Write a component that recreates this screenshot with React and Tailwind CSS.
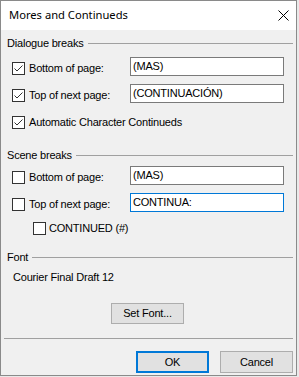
import React from "react";

const ff = { fontFamily: '"Liberation Sans", Arial, sans-serif', letterSpacing: "-0.2px" };

function Check({ checked }) {
  return (
    <div className="w-[13px] h-[13px] border border-[#333333] bg-white shrink-0 flex items-center justify-center">
      {checked && (
        <svg width="11" height="11" viewBox="0 0 11 11">
          <path d="M1.5 5.5 L4 8 L9.5 2.5" fill="none" stroke="#333333" strokeWidth="1" />
        </svg>
      )}
    </div>
  );
}

function Header({ label }) {
  return (
    <div className="flex items-center h-[14px] gap-[4px] pr-[3px]">
      <span className="text-[11px] leading-[14px] text-black whitespace-nowrap">{label}</span>
      <div className="flex-1 h-px bg-[#a0a0a0]" />
    </div>
  );
}

function Row({ label, checked, value, focused, mt }) {
  return (
    <div className={`flex items-start h-[19px] pl-[5px] ${mt}`}>
      <div className="w-[118px] flex items-center gap-[4px] mt-[5px]">
        <Check checked={checked} />
        <span className="text-[11px] leading-[13px] text-black whitespace-nowrap">{label}</span>
      </div>
      <div
        className={`w-[154px] h-[19px] bg-white flex items-center pl-[2px] text-[11px] leading-[13px] text-black ${
          focused ? "border border-[#0078d7]" : "border border-[#7a7a7a]"
        }`}
      >
        {value}
      </div>
    </div>
  );
}

export default function App() {
  return (
    <div className="w-[299px] h-[377px] bg-[#e9e9e9]" style={ff}>
      <div className="w-[297px] h-[376px] border border-[#8a8a8a] bg-[#f0f0f0] flex flex-col">
        <div className="h-[29px] bg-white flex items-center justify-between pl-[8px] pr-[6px] shrink-0">
          <span
            className="text-[11.2px] text-black tracking-normal"
            style={{ fontFamily: '"Noto Sans", "Open Sans", sans-serif', letterSpacing: "0px" }}
          >
            Mores and Continueds
          </span>
          <svg width="11" height="11" viewBox="0 0 11 11" className="mr-[1px]">
            <path d="M0.5 0.5 L10.5 10.5 M10.5 0.5 L0.5 10.5" stroke="#000" strokeWidth="1" />
          </svg>
        </div>
        <div className="flex flex-col pl-[6px] pr-[0px]">
          <div className="mt-[6px]">
            <Header label="Dialogue breaks" />
          </div>
          <Row mt="mt-[7px]" label="Bottom of page:" checked value="(MAS)" />
          <Row mt="mt-[8px]" label="Top of next page:" checked value="(CONTINUACIÓN)" />
          <div className="flex items-start h-[19px] pl-[5px] mt-[8px]">
            <div className="flex items-center gap-[4px] mt-[5px]">
              <Check checked />
              <span className="text-[11px] leading-[13px] text-black whitespace-nowrap">
                Automatic Character Continueds
              </span>
            </div>
          </div>
          <div className="mt-[18px]">
            <Header label="Scene breaks" />
          </div>
          <Row mt="mt-[4px]" label="Bottom of page:" value="(MAS)" />
          <Row mt="mt-[8px]" label="Top of next page:" value="CONTINUA:" focused />
          <div className="flex items-center h-[13px] pl-[26px] mt-[10px] gap-[3px]">
            <Check />
            <span className="text-[11px] leading-[13px] text-black whitespace-nowrap">CONTINUED (#)</span>
          </div>
          <div className="mt-[15px]">
            <Header label="Font" />
          </div>
          <div className="mt-[6px] pl-[6px] h-[14px] text-[11px] leading-[14px] text-black">
            Courier Final Draft 12
          </div>
        </div>
        <div className="flex justify-center mt-[19px] pr-[2px]">
          <button className="w-[73px] h-[21px] bg-[#e1e1e1] border border-[#adadad] text-[11px] text-black">
            Set Font...
          </button>
        </div>
        <div className="mt-[14px] mx-[3px] h-px bg-[#a0a0a0]" />
        <div className="flex justify-end gap-[11px] mt-[12px] pr-[3px]">
          <button className="w-[73px] h-[22px] bg-[#e1e1e1] border-2 border-[#0078d7] text-[11px] text-black">
            OK
          </button>
          <button className="w-[73px] h-[22px] bg-[#e1e1e1] border border-[#adadad] text-[11px] text-black">
            Cancel
          </button>
        </div>
      </div>
    </div>
  );
}
